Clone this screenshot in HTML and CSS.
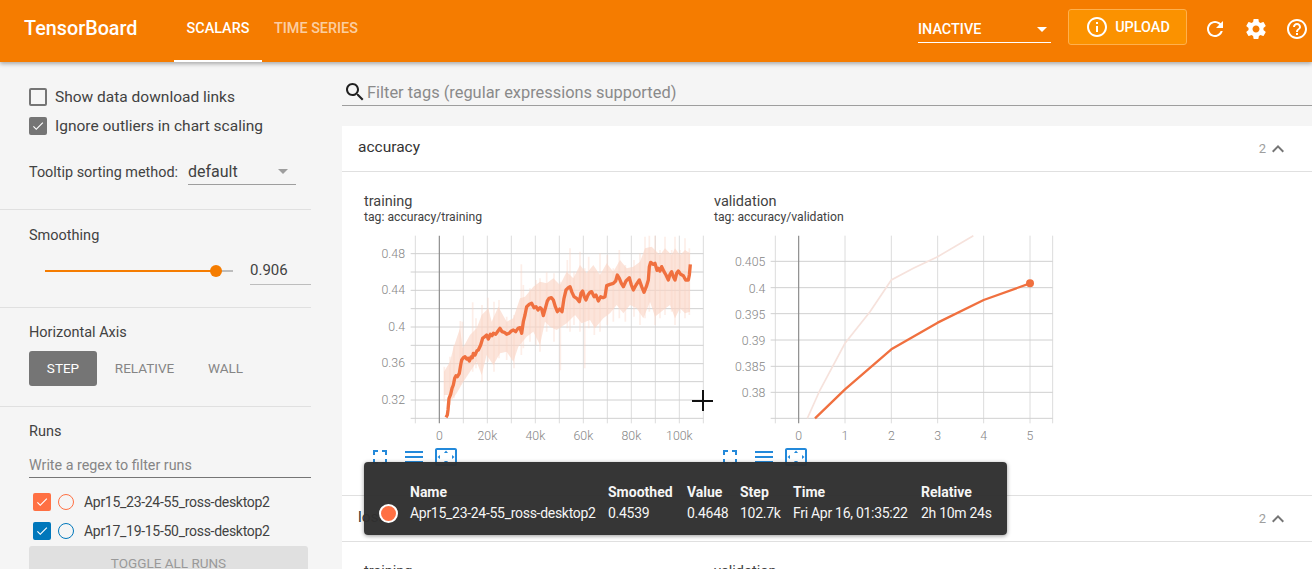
FILE: index.html
```html
<!DOCTYPE html>
<html lang="en">
<head>
<meta charset="UTF-8">
<meta name="viewport" content="width=device-width, initial-scale=1.0">
<title>TensorBoard</title>
<link rel="stylesheet" href="styles.css">
</head>
<body>
<header class="topbar">
  <div class="logo">TensorBoard</div>
  <nav class="tabs">
    <div class="tab active">SCALARS</div>
    <div class="tab">TIME SERIES</div>
  </nav>
  <div class="topbar-right">
    <div class="inactive-select"><span>INACTIVE</span><i class="caret caret-white"></i></div>
    <div class="upload">
      <svg class="icon-24" viewBox="0 0 24 24"><path d="M11 17h2v-6h-2v6zm1-15C6.48 2 2 6.48 2 12s4.48 10 10 10 10-4.48 10-10S17.52 2 12 2zm0 18c-4.41 0-8-3.59-8-8s3.59-8 8-8 8 3.59 8 8-3.59 8-8 8zM11 9h2V7h-2v2z"/></svg>
      <span>UPLOAD</span>
    </div>
    <svg class="icon-24 top-icon" viewBox="0 0 24 24"><path d="M17.65 6.35C16.2 4.9 14.21 4 12 4c-4.42 0-7.99 3.58-7.99 8s3.57 8 7.99 8c3.73 0 6.84-2.55 7.73-6h-2.08c-.82 2.33-3.04 4-5.65 4-3.31 0-6-2.69-6-6s2.69-6 6-6c1.66 0 3.14.69 4.22 1.78L13 11h7V4l-2.35 2.35z"/></svg>
    <svg class="icon-24 top-icon" viewBox="0 0 24 24"><path d="M19.43 12.98c.04-.32.07-.64.07-.98s-.03-.66-.07-.98l2.11-1.65c.19-.15.24-.42.12-.64l-2-3.46c-.12-.22-.39-.3-.61-.22l-2.49 1c-.52-.4-1.08-.73-1.69-.98l-.38-2.65C14.46 2.18 14.25 2 14 2h-4c-.25 0-.46.18-.49.42l-.38 2.65c-.61.25-1.17.59-1.69.98l-2.49-1c-.23-.09-.49 0-.61.22l-2 3.46c-.13.22-.07.49.12.64l2.11 1.65c-.04.32-.07.65-.07.98s.03.66.07.98l-2.11 1.65c-.19.15-.24.42-.12.64l2 3.46c.12.22.39.3.61.22l2.49-1c.52.4 1.08.73 1.69.98l.38 2.65c.03.24.24.42.49.42h4c.25 0 .46-.18.49-.42l.38-2.65c.61-.25 1.17-.59 1.69-.98l2.49 1c.23.09.49 0 .61-.22l2-3.46c.12-.22.07-.49-.12-.64l-2.11-1.65zM12 15.5c-1.93 0-3.5-1.57-3.5-3.5s1.57-3.5 3.5-3.5 3.5 1.57 3.5 3.5-1.57 3.5-3.5 3.5z"/></svg>
    <svg class="icon-24 top-icon" viewBox="0 0 24 24"><path d="M11 18h2v-2h-2v2zm1-16C6.48 2 2 6.48 2 12s4.48 10 10 10 10-4.48 10-10S17.52 2 12 2zm0 18c-4.41 0-8-3.59-8-8s3.59-8 8-8 8 3.59 8 8-3.59 8-8 8zm0-14c-2.21 0-4 1.79-4 4h2c0-1.1.9-2 2-2s2 .9 2 2c0 2-3 1.75-3 5h2c0-2.25 3-2.5 3-5 0-2.21-1.79-4-4-4z"/></svg>
  </div>
</header>

<div class="layout">
  <aside class="sidebar">
    <section class="side-section options">
      <div class="check-row">
        <span class="box"></span>
        <span>Show data download links</span>
      </div>
      <div class="check-row">
        <span class="box checked grey"><svg viewBox="0 0 24 24"><path d="M9 16.17L4.83 12l-1.42 1.41L9 19 21 7l-1.41-1.41z"/></svg></span>
        <span>Ignore outliers in chart scaling</span>
      </div>
      <div class="sort-row">
        <span class="sort-label">Tooltip sorting method:</span>
        <div class="sort-select"><span>default</span><i class="caret caret-grey"></i></div>
      </div>
    </section>

    <section class="side-section smoothing">
      <div class="side-title">Smoothing</div>
      <div class="slider-row">
        <div class="slider">
          <div class="slider-fill"></div>
          <div class="slider-thumb"></div>
        </div>
        <div class="slider-value">0.906</div>
      </div>
    </section>

    <section class="side-section axis">
      <div class="side-title">Horizontal Axis</div>
      <div class="axis-buttons">
        <div class="axis-btn selected">STEP</div>
        <div class="axis-btn relative-btn">RELATIVE</div>
        <div class="axis-btn wall-btn">WALL</div>
      </div>
    </section>

    <section class="side-section runs">
      <div class="side-title">Runs</div>
      <div class="run-filter">Write a regex to filter runs</div>
      <div class="run-row">
        <span class="box checked run-orange"><svg viewBox="0 0 24 24"><path d="M9 16.17L4.83 12l-1.42 1.41L9 19 21 7l-1.41-1.41z"/></svg></span>
        <span class="ring ring-orange"></span>
        <span>Apr15_23-24-55_ross-desktop2</span>
      </div>
      <div class="run-row">
        <span class="box checked run-blue"><svg viewBox="0 0 24 24"><path d="M9 16.17L4.83 12l-1.42 1.41L9 19 21 7l-1.41-1.41z"/></svg></span>
        <span class="ring ring-blue"></span>
        <span>Apr17_19-15-50_ross-desktop2</span>
      </div>
      <div class="toggle-all">TOGGLE ALL RUNS</div>
    </section>
  </aside>

  <main class="content">
    <div class="filter-tags">
      <svg class="icon-24 search-icon" viewBox="0 0 24 24"><path d="M15.5 14h-.79l-.28-.27C15.41 12.59 16 11.11 16 9.5 16 5.91 13.09 3 9.5 3S3 5.91 3 9.5 5.91 16 9.5 16c1.61 0 3.09-.59 4.23-1.57l.27.28v.79l5 4.99L20.49 19l-4.99-5zm-6 0C7.01 14 5 11.99 5 9.5S7.01 5 9.5 5 14 7.01 14 9.5 11.99 14 9.5 14z"/></svg>
      <span>Filter tags (regular expressions supported)</span>
    </div>

    <section class="card">
      <div class="card-head">
        <span class="card-name">accuracy</span>
        <span class="card-count">2</span>
        <svg class="chevron" viewBox="0 0 24 24"><path d="M12 8l-6 6 1.41 1.41L12 10.83l4.59 4.58L18 14z"/></svg>
      </div>
      <div class="card-body">
        <div class="chart">
          <div class="chart-title">training</div>
          <div class="chart-tag">tag: accuracy/training</div>
          <svg class="plot" viewBox="42 141 1050 654">
            <path class="v-grid" d="M196 152V715M340 152V715M412 152V715M484 152V715M556 152V715M628 152V715M700 152V715M772 152V715M844 152V715M916 152V715M988 152V715M1060 152V715"/>
            <path class="h-grid" d="M182 206H1060M182 261H1060M182 316H1060M182 371H1060M182 426H1060M182 481H1060M182 536H1060M182 590H1060M182 645H1060M182 700H1060"/>
            <path class="zero" d="M268 152V715"/>
            <polygon class="raw-band" points="282,560 300,530 310,490 330,430 338,490 360,450 380,430 395,390 415,370 425,410 445,365 470,410 490,400 510,340 525,335 550,305 570,290 590,295 610,280 630,300 650,260 670,280 690,240 710,265 730,240 750,270 770,235 790,260 810,225 830,250 850,245 870,230 885,190 905,185 930,210 945,190 965,210 975,190 990,210 1005,195 1020,205 1020,380 1005,385 990,370 975,400 960,360 940,375 915,395 900,350 880,400 860,370 840,360 820,385 800,360 780,385 760,400 735,430 720,405 695,415 675,390 650,415 620,435 600,425 585,410 570,480 550,440 530,455 505,485 490,530 470,500 450,505 430,540 410,510 395,570 380,530 360,560 340,590 320,625 305,645 295,630 282,630"/>
            <path class="raw-spikes" d="M283 545V650M300 515V660M312 480V640M331 408V600M337 410V590M368 352V560M378 400V550M396 360V590M414 338V530M432 350V560M447 345V520M470 395V525M492 390V550M514 238V510M520 300V490M540 310V470M558 285V480M570 280V500M590 262V440M612 265V470M631 290V556M652 225V430M660 190V440M672 260V420M690 200V440M704 250V550M716 215V430M733 260V450M750 205V440M772 210V420M790 250V410M808 195V400M826 240V410M852 225V395M870 205V420M885 155V400M898 152V380M915 152V420M930 195V400M945 155V390M965 195V380M975 155V420M990 195V385M1005 160V400M1018 190V390"/>
            <polyline class="smoothed thick" points="288,697 292,690 294,675 297,640 302,628 306,610 310,600 314,580 318,572 322,575 328,565 332,540 335,525 340,518 345,515 350,522 354,520 358,528 363,516 367,518 370,505 375,510 381,497 385,495 392,480 398,460 404,455 410,450 415,462 421,448 426,452 430,445 437,448 444,438 450,430 456,440 463,442 470,448 477,445 484,438 490,435 497,440 504,430 510,428 515,445 520,410 525,390 530,365 538,358 545,355 552,368 558,365 564,375 570,368 575,372 580,392 586,370 592,348 597,340 604,338 610,345 616,365 622,380 629,372 636,380 642,340 648,315 655,308 660,305 666,322 672,335 680,340 688,350 693,325 698,318 703,335 708,345 714,330 720,322 725,320 732,335 738,330 745,348 752,335 759,338 765,335 770,302 780,298 790,295 797,288 802,270 808,280 814,295 820,305 828,288 838,278 844,300 850,315 858,300 868,285 875,305 882,322 889,305 895,285 898,245 902,232 910,238 915,235 921,256 925,250 930,258 935,245 942,260 948,270 955,285 960,268 965,260 970,275 975,285 980,265 985,258 992,268 1000,272 1007,285 1015,285 1018,270 1021,238"/>
            <g class="y-labels">
              <text x="165" y="218">0.48</text>
              <text x="165" y="328">0.44</text>
              <text x="165" y="438">0.4</text>
              <text x="165" y="546">0.36</text>
              <text x="165" y="657">0.32</text>
            </g>
            <g class="x-labels">
              <text x="268" y="765">0</text>
              <text x="412" y="765">20k</text>
              <text x="556" y="765">40k</text>
              <text x="700" y="765">60k</text>
              <text x="844" y="765">80k</text>
              <text x="988" y="765">100k</text>
            </g>
          </svg>
          <div class="chart-tools">
            <svg class="tool" viewBox="0 0 24 24"><path d="M7 14H5v5h5v-2H7v-3zm-2-4h2V7h3V5H5v5zm12 7h-3v2h5v-5h-2v3zM14 5v2h3v3h2V5h-5z"/></svg>
            <svg class="tool" viewBox="0 0 24 24"><path d="M3 18h18v-2H3v2zm0-5h18v-2H3v2zm0-7v2h18V6H3z"/></svg>
            <svg class="tool" viewBox="0 0 24 24"><path d="M12.01 5.5L10 8h4l-1.99-2.5zM18 10v4l2.5-1.99L18 10zM6 10l-2.5 2.01L6 14v-4zm8 6h-4l2.01 2.5L14 16zm7-13H3c-1.1 0-2 .9-2 2v14c0 1.1.9 2 2 2h18c1.1 0 2-.9 2-2V5c0-1.1-.9-2-2-2zm0 16.01H3V4.99h18v14.02z"/></svg>
          </div>
        </div>

        <div class="chart">
          <div class="chart-title">validation</div>
          <div class="chart-tag">tag: accuracy/validation</div>
          <svg class="plot" viewBox="42 141 1050 654">
            <path class="v-grid" d="M226 152V715M435 152V715M574 152V715M713 152V715M851 152V715M990 152V715M1058 152V715"/>
            <path class="h-grid" d="M212 229H1058M212 308H1058M212 386H1058M212 465H1058M212 544H1058M212 622H1058M212 700H1058"/>
            <path class="zero" d="M296 152V715"/>
            <polyline class="raw-line" points="322,700 360,615 435,475 510,380 574,285 640,250 713,215 820,152"/>
            <polyline class="smoothed" points="345,700 435,613 574,493 713,413 851,345 990,295"/>
            <circle class="last-point" cx="990" cy="295" r="12"/>
            <g class="y-labels">
              <text x="196" y="244">0.405</text>
              <text x="196" y="323">0.4</text>
              <text x="196" y="401">0.395</text>
              <text x="196" y="480">0.39</text>
              <text x="196" y="559">0.385</text>
              <text x="196" y="637">0.38</text>
            </g>
            <g class="x-labels">
              <text x="296" y="765">0</text>
              <text x="435" y="765">1</text>
              <text x="574" y="765">2</text>
              <text x="713" y="765">3</text>
              <text x="851" y="765">4</text>
              <text x="990" y="765">5</text>
            </g>
          </svg>
          <div class="chart-tools">
            <svg class="tool" viewBox="0 0 24 24"><path d="M7 14H5v5h5v-2H7v-3zm-2-4h2V7h3V5H5v5zm12 7h-3v2h5v-5h-2v3zM14 5v2h3v3h2V5h-5z"/></svg>
            <svg class="tool" viewBox="0 0 24 24"><path d="M3 18h18v-2H3v2zm0-5h18v-2H3v2zm0-7v2h18V6H3z"/></svg>
            <svg class="tool" viewBox="0 0 24 24"><path d="M12.01 5.5L10 8h4l-1.99-2.5zM18 10v4l2.5-1.99L18 10zM6 10l-2.5 2.01L6 14v-4zm8 6h-4l2.01 2.5L14 16zm7-13H3c-1.1 0-2 .9-2 2v14c0 1.1.9 2 2 2h18c1.1 0 2-.9 2-2V5c0-1.1-.9-2-2-2zm0 16.01H3V4.99h18v14.02z"/></svg>
          </div>
        </div>
      </div>
    </section>

    <section class="card">
      <div class="card-head">
        <span class="card-name">loss</span>
        <span class="card-count">2</span>
        <svg class="chevron" viewBox="0 0 24 24"><path d="M12 8l-6 6 1.41 1.41L12 10.83l4.59 4.58L18 14z"/></svg>
      </div>
      <div class="card-body">
        <div class="chart"><div class="chart-title">training</div></div>
        <div class="chart"><div class="chart-title">validation</div></div>
      </div>
    </section>
  </main>
</div>

<!-- chart hover tooltip and mouse cursor, both float over the page -->
<div class="tooltip">
  <table>
    <tr>
      <th></th>
      <th class="col-name">Name</th>
      <th class="col-smoothed">Smoothed</th>
      <th class="col-value">Value</th>
      <th class="col-step">Step</th>
      <th class="col-time">Time</th>
      <th>Relative</th>
    </tr>
    <tr>
      <td class="dot-cell"><span class="dot"></span></td>
      <td>Apr15_23-24-55_ross-desktop2</td>
      <td>0.4539</td>
      <td>0.4648</td>
      <td>102.7k</td>
      <td>Fri Apr 16, 01:35:22</td>
      <td>2h 10m 24s</td>
    </tr>
  </table>
</div>
<div class="crosshair"></div>
</body>
</html>
```

FILE: styles.css
```css
* {
  box-sizing: border-box;
}

html, body {
  height: 100%;
}

body {
  margin: 0;
  overflow: hidden;
  font-family: Roboto, "Liberation Sans", sans-serif;
  background-color: #f5f5f5;
  color: #424242;
  display: flex;
  flex-direction: column;
}

/* top bar */
.topbar {
  flex: none;
  height: 62px;
  background-color: #f57c00;
  color: white;
  display: flex;
  align-items: center;
  padding-left: 24px;
  box-shadow: 0 2px 4px rgba(0, 0, 0, 0.3);
  position: relative;
  z-index: 2;
}

.logo {
  font-size: 19.8px;
  font-weight: 500;
  width: 150px;
  padding-bottom: 6px;
}

.tabs {
  display: flex;
  height: 100%;
}

.tab {
  display: flex;
  align-items: center;
  justify-content: center;
  height: 100%;
  padding: 0 12px 6px;
  font-size: 14.4px;
  font-weight: 500;
  color: rgba(255, 255, 255, 0.65);
}

.tab.active {
  width: 88px;
  color: white;
  border-bottom: 2px solid white;
  padding-bottom: 4px;
}

.topbar-right {
  margin-left: auto;
  display: flex;
  align-items: center;
  padding-right: 3px;
  padding-bottom: 8px;
}

.inactive-select {
  width: 133px;
  height: 26px;
  margin-top: 6px;
  margin-right: 17px;
  display: flex;
  align-items: center;
  justify-content: space-between;
  padding-right: 4px;
  border-bottom: 1px solid white;
  font-size: 14.4px;
  font-weight: 500;
}

.caret {
  width: 0;
  height: 0;
  border-left: 5px solid transparent;
  border-right: 5px solid transparent;
}

.caret-white {
  border-top: 5px solid white;
}

.caret-grey {
  border-top: 5px solid #9e9e9e;
}

.upload {
  width: 119px;
  height: 36px;
  margin-right: 16px;
  display: flex;
  align-items: center;
  justify-content: center;
  gap: 6px;
  background-color: #fb9200;
  border: 1px solid #ffb04d;
  border-radius: 3px;
  font-size: 14.4px;
  font-weight: 500;
}

.icon-24 {
  width: 24px;
  height: 24px;
  flex: none;
  fill: currentColor;
}

.top-icon {
  margin-left: 17px;
  margin-top: 3px;
}

.upload + .top-icon {
  margin-left: 0;
}

/* layout */
.layout {
  flex: 1;
  display: flex;
  min-height: 0;
}

.sidebar {
  flex: none;
  width: 311px;
  margin-right: 31px;
  overflow: hidden;
}

.side-section {
  padding-left: 29px;
  border-bottom: 1px solid #e0e0e0;
  font-size: 15px;
}

.options {
  height: 148px;
  padding-top: 20px;
}

.check-row {
  display: flex;
  align-items: center;
  gap: 8px;
  height: 29px;
  font-size: 15.5px;
}

.box {
  flex: none;
  width: 18px;
  height: 18px;
  border: 2px solid #757575;
  border-radius: 2px;
  display: block;
}

.box svg {
  display: block;
  width: 14px;
  height: 14px;
  fill: white;
}

.checked.grey {
  background-color: #757575;
}

.run-orange {
  background-color: #ff7043;
  border-color: #ff7043;
}

.run-blue {
  background-color: #0077bb;
  border-color: #0077bb;
}

.sort-row {
  display: flex;
  align-items: center;
  margin-top: 19px;
  height: 26px;
}

.sort-label {
  font-size: 14.4px;
  width: 159px;
}

.sort-select {
  width: 108px;
  height: 26px;
  margin-top: -1px;
  display: flex;
  align-items: center;
  justify-content: space-between;
  padding-right: 8px;
  border-bottom: 1px solid #9e9e9e;
  font-size: 16px;
}

.smoothing {
  height: 98px;
  padding-top: 17px;
}

.side-title {
  font-size: 14.5px;
  line-height: 18px;
}

.slider-row {
  display: flex;
  align-items: center;
  margin-top: 12px;
  height: 28px;
}

.slider {
  width: 188px;
  height: 2px;
  margin-left: 16px;
  margin-right: 17px;
  background-color: #bdbdbd;
  position: relative;
}

.slider-fill {
  width: 171px;
  height: 100%;
  background-color: #f57c00;
}

.slider-thumb {
  position: absolute;
  left: 165px;
  top: -5px;
  width: 12px;
  height: 12px;
  border-radius: 50%;
  background-color: #f57c00;
}

.slider-value {
  flex: 1;
  height: 28px;
  line-height: 26px;
  font-size: 15px;
  border-bottom: 1px solid #bdbdbd;
}

.axis {
  height: 99px;
  padding-top: 16px;
}

.axis-buttons {
  display: flex;
  margin-top: 9px;
  font-size: 13.5px;
  font-weight: 400;
  color: #858585;
}

.axis-btn {
  height: 35px;
  line-height: 35px;
  text-align: center;
}

.axis-btn.selected {
  width: 68px;
  background-color: #757575;
  color: white;
  border-radius: 3px;
}

.relative-btn {
  width: 95px;
}

.wall-btn {
  width: 67px;
}

.runs {
  border-bottom: none;
  padding-top: 16px;
}

.run-filter {
  margin-top: 7px;
  margin-bottom: 9px;
  height: 30px;
  display: flex;
  align-items: flex-end;
  padding-bottom: 4px;
  font-size: 14.3px;
  color: #858585;
  border-bottom: 1px solid #757575;
}

.run-row {
  display: flex;
  align-items: center;
  height: 29px;
  padding-left: 4px;
  font-size: 14px;
  letter-spacing: -0.29px;
}

.ring {
  flex: none;
  width: 16px;
  height: 16px;
  margin: 0 10px 0 7px;
  border-radius: 50%;
  border: 1.5px solid;
}

.ring-orange {
  border-color: #ff7043;
}

.ring-blue {
  border-color: #0077bb;
}

.toggle-all {
  width: 279px;
  height: 36px;
  margin-top: 1px;
  line-height: 34px;
  text-align: center;
  font-size: 13.5px;
  color: #999;
  background-color: #e0e0e0;
  border-radius: 3px;
}

/* main pane */
.content {
  flex: 1;
  min-width: 0;
  overflow: hidden;
}

.filter-tags {
  height: 44px;
  padding: 17px 0 0 1px;
  display: flex;
  align-items: center;
  font-size: 16.4px;
  color: #8a8a8a;
  border-bottom: 1px solid #9e9e9e;
}

.search-icon {
  color: #212121;
}

.card {
  background-color: white;
  margin-top: 20px;
  border-bottom: 1px solid #e0e0e0;
}

.card + .card {
  margin-top: 0;
}

.card-head {
  height: 46px;
  display: flex;
  align-items: center;
  padding-left: 16px;
  padding-right: 22px;
  border-bottom: 1px solid #e0e0e0;
}

.card-name {
  font-size: 15.5px;
  color: #333;
  margin-right: auto;
  margin-bottom: 3px;
}

.card-count {
  font-size: 13px;
  color: #9e9e9e;
  margin-right: 0;
  margin-bottom: 1px;
}

.chevron {
  width: 24px;
  height: 24px;
  fill: #757575;
}

.card-body {
  display: flex;
  height: 323px;
  padding: 21px 0 0 22px;
}

.chart {
  width: 350px;
}

.chart-title {
  font-size: 14.5px;
  line-height: 17px;
  color: #424242;
}

.chart-tag {
  font-size: 12.2px;
  line-height: 15px;
  color: #424242;
}

.plot {
  display: block;
  width: 350px;
  height: 218px;
  margin-top: 7px;
}

.v-grid {
  stroke: #dcdcdc;
  stroke-width: 3;
  fill: none;
}

.h-grid {
  stroke: #d0d0d0;
  stroke-width: 3;
  fill: none;
}

.zero {
  stroke: #8a8a8a;
  stroke-width: 3.5;
  fill: none;
}

.raw-band {
  fill: #fbd5c6;
  fill-opacity: 0.65;
}

.raw-spikes {
  fill: none;
  stroke: #fbd5c6;
  stroke-width: 5;
  stroke-opacity: 0.4;
}

.raw-line {
  fill: none;
  stroke: #f6e2dc;
  stroke-width: 5;
}

.smoothed {
  fill: none;
  stroke: #f0703f;
  stroke-width: 7;
  stroke-linejoin: round;
}

.smoothed.thick {
  stroke-width: 10;
}

.last-point {
  fill: #f0703f;
}

.y-labels text,
.x-labels text {
  font-size: 37px;
  font-weight: 300;
  fill: #858585;
}

.y-labels text {
  text-anchor: end;
}

.x-labels text {
  text-anchor: middle;
}

.chart-tools {
  display: flex;
  gap: 10px;
  padding-left: 4px;
  margin-top: -5px;
}

.tool {
  width: 24px;
  height: 24px;
  fill: #2389da;
}

.tool:last-child {
  margin-left: -2px;
}

/* overlays */
.tooltip {
  position: absolute;
  left: 364px;
  top: 462px;
  width: 643px;
  height: 73px;
  background-color: rgba(47, 47, 47, 0.97);
  color: #f5f5f5;
  border-radius: 4px;
  box-shadow: 0 1px 4px rgba(0, 0, 0, 0.4);
  z-index: 3;
  font-size: 14px;
  padding-top: 22px;
}

.tooltip table {
  border-collapse: collapse;
}

.tooltip th {
  font-weight: 700;
  text-align: left;
  padding: 0 0 3px;
  line-height: 17px;
}

.tooltip td {
  padding: 0;
  line-height: 17px;
  letter-spacing: -0.29px;
}

.dot-cell {
  width: 46px;
  padding-left: 15px !important;
}

.dot {
  display: block;
  width: 19px;
  height: 19px;
  border-radius: 50%;
  background-color: #ff7043;
  border: 2px solid white;
}

.col-name {
  width: 198px;
}

.col-smoothed {
  width: 79px;
}

.col-value {
  width: 53px;
}

.col-step {
  width: 53px;
}

.col-time {
  width: 128px;
}

.crosshair {
  position: absolute;
  left: 692px;
  top: 390px;
  width: 21px;
  height: 21px;
  z-index: 3;
  background:
    linear-gradient(#111, #111) center / 100% 2px no-repeat,
    linear-gradient(#111, #111) center / 2px 100% no-repeat;
}
```
